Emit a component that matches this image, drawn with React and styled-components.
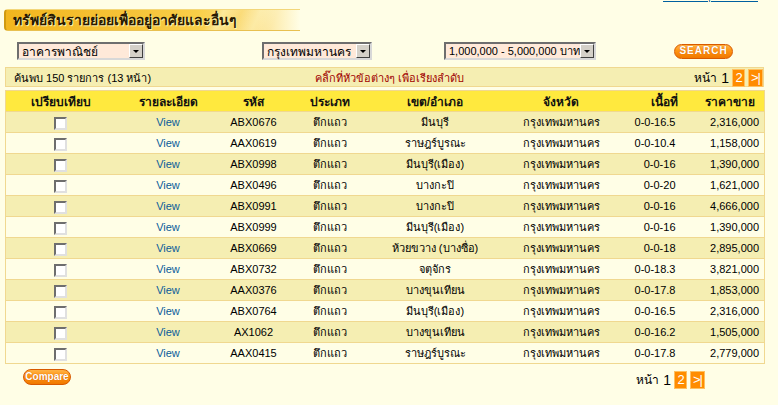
import React from 'react';
import styled, { createGlobalStyle } from 'styled-components';

const Global = createGlobalStyle`
  html, body { margin: 0; padding: 0; background: #fffee6; }
  body {
    font-family: Tahoma, "Liberation Sans", "DejaVu Sans", sans-serif;
    font-size: 12px;
    color: #000;
  }
`;

const Page = styled.div`
  width: 778px;
  height: 405px;
  overflow: hidden;
  display: flex;
  flex-direction: column;
`;

const TopLinkRow = styled.div`
  height: 3px;
  overflow: hidden;
  display: flex;
  justify-content: flex-end;
  align-items: flex-end;
  padding-right: 20px;
`;

const TopLink = styled.a`
  color: #0060a0;
  font-size: 11px;
  line-height: 13px;
  white-space: nowrap;
`;

const TitleBar = styled.div`
  margin: 6px 0 0 4px;
  width: 296px;
  height: 22px;
  box-sizing: border-box;
  border-radius: 4px 0 0 4px;
  border-left: 2px solid #d09a10;
  border-top: 1px solid #f3d77a;
  border-bottom: 1px solid #e8c050;
  background:
    linear-gradient(115deg, transparent 68%, rgba(255,255,220,0.45) 72%, transparent 78%, rgba(255,255,220,0.35) 84%, transparent 90%),
    linear-gradient(90deg, #f2b61e 0%, #f6c43a 45%, #f9cf48 65%, #fbe08a 85%, #fffee6 100%);
  display: flex;
  align-items: center;
  padding-left: 7px;
`;

const TitleText = styled.h1`
  margin: 0;
  font-size: 14px;
  font-weight: bold;
  color: #2a1a00;
  text-shadow: 1px 1px 0 #fff3b0;
  white-space: nowrap;
`;

const FilterRow = styled.div`
  display: flex;
  align-items: center;
  height: 18px;
  margin-top: 11px;
`;

const Select = styled.div`
  margin-left: ${p => p.$ml}px;
  width: ${p => p.$w}px;
  height: 18px;
  box-sizing: border-box;
  border: 2px solid;
  border-color: #6e6e6e #d8d8d8 #d8d8d8 #6e6e6e;
  background: #ffe9d9;
  display: flex;
  align-items: center;
  justify-content: space-between;
`;

const SelectText = styled.span`
  padding-left: 3px;
  font-size: ${p => p.$fs || 12}px;
  white-space: nowrap;
  overflow: hidden;
  color: #000;
`;

const SelectArrow = styled.span`
  flex: none;
  width: 14px;
  height: 14px;
  box-sizing: border-box;
  background: #d4d0c8;
  border: 1px solid;
  border-color: #fff #404040 #404040 #fff;
  display: flex;
  align-items: center;
  justify-content: center;
  &::after {
    content: '';
    border-left: 3px solid transparent;
    border-right: 3px solid transparent;
    border-top: 3px solid #000;
  }
`;

const PillButton = styled.button`
  margin-left: ${p => p.$ml || 0}px;
  width: ${p => p.$w}px;
  height: ${p => p.$h}px;
  padding: 0;
  border: 1px solid #d85a00;
  border-radius: 9px;
  background: linear-gradient(180deg, #ffb347 0%, #ff9412 45%, #f07800 100%);
  color: #fff;
  font-family: "Liberation Sans", Arial, sans-serif;
  font-weight: bold;
  font-size: ${p => p.$fs}px;
  letter-spacing: ${p => p.$ls || 0}px;
  line-height: 1;
  white-space: nowrap;
  text-shadow: 0 0 1px #c05000;
  cursor: pointer;
`;

const InfoBar = styled.div`
  margin: 7px 0 0 5px;
  width: 759px;
  height: 20px;
  box-sizing: border-box;
  border: 1px solid #f0d890;
  background: #f5eeb2;
  display: grid;
  grid-template-columns: 301px 1fr auto;
  align-items: center;
  padding-left: 8px;
  font-size: 11px;
`;

const InfoText = styled.span`
  color: ${p => p.$c || '#000'};
  white-space: nowrap;
`;

const Pager = styled.div`
  display: flex;
  align-items: center;
  gap: 3px;
  justify-content: flex-end;
`;

const PagerLabel = styled.span`
  font-size: 12px;
  margin-right: 1px;
`;

const PagerNum = styled.span`
  font-family: "Liberation Sans", sans-serif;
  font-size: 14px;
`;

const PageBox = styled.a`
  width: ${p => p.$w || 13}px;
  height: 18px;
  box-sizing: border-box;
  border: 1px solid #ffc060;
  background: #ff8c00;
  color: #fff;
  font-family: "Liberation Sans", sans-serif;
  font-size: 13px;
  letter-spacing: -1px;
  display: flex;
  align-items: center;
  justify-content: center;
  text-decoration: none;
`;

const Table = styled.table`
  margin: 3px 0 0 5px;
  width: 759px;
  border-collapse: collapse;
  table-layout: fixed;
  border: 1px solid #f0d890;
`;

const Th = styled.th`
  height: 20px;
  padding: 0 ${p => p.$pr || 0}px 0 0;
  background: #ffe93e;
  font-size: 12px;
  font-weight: bold;
  color: #111;
  text-align: ${p => p.$align || 'center'};
  border-bottom: 1px solid #f0d890;
`;

const Tr = styled.tr`
  background: ${p => (p.$odd ? '#f5eeb2' : '#fffee6')};
`;

const Td = styled.td`
  height: 20px;
  padding: 0 ${p => p.$pr || 0}px 0 0;
  border-bottom: 1px solid #f0d890;
  text-align: ${p => p.$align || 'center'};
  white-space: nowrap;
  font-size: 11px;
  color: #000;
`;

const Check = styled.input.attrs({ type: 'checkbox' })`
  appearance: none;
  margin: 2px 0 0 0;
  width: 13px;
  height: 13px;
  box-sizing: border-box;
  background: #fff;
  border: 2px solid;
  border-color: #6e6e6e #e0e0e0 #e0e0e0 #6e6e6e;
  vertical-align: middle;
`;

const ViewLink = styled.a`
  color: #0a5c9a;
  text-decoration: none;
`;

const BottomRow = styled.div`
  display: flex;
  align-items: flex-start;
  justify-content: space-between;
  margin: 5px 0 0 23px;
  width: 682px;
`;

const BottomPager = styled(Pager)`
  margin-top: 1px;
`;

const rows = [
  ['ABX0676', 'มีนบุรี', '0-0-16.5', '2,316,000'],
  ['AAX0619', 'ราษฎร์บูรณะ', '0-0-10.4', '1,158,000'],
  ['ABX0998', 'มีนบุรี(เมือง)', '0-0-16', '1,390,000'],
  ['ABX0496', 'บางกะปิ', '0-0-20', '1,621,000'],
  ['ABX0991', 'บางกะปิ', '0-0-16', '4,666,000'],
  ['ABX0999', 'มีนบุรี(เมือง)', '0-0-16', '1,390,000'],
  ['ABX0669', 'ห้วยขวาง (บางซื่อ)', '0-0-18', '2,895,000'],
  ['ABX0732', 'จตุจักร', '0-0-18.3', '3,821,000'],
  ['AAX0376', 'บางขุนเทียน', '0-0-17.8', '1,853,000'],
  ['ABX0764', 'มีนบุรี(เมือง)', '0-0-16.5', '2,316,000'],
  ['AX1062', 'บางขุนเทียน', '0-0-16.2', '1,505,000'],
  ['AAX0415', 'ราษฎร์บูรณะ', '0-0-17.8', '2,779,000'],
];

const PagerBlock = () => (
  <>
    <PagerLabel>หน้า</PagerLabel>
    <PagerNum>1</PagerNum>
    <PageBox href="#">2</PageBox>
    <PageBox href="#" $w={15}>&gt;|</PageBox>
  </>
);

export default function App() {
  return (
    <Page>
      <Global />
      <TopLinkRow>
        <TopLink href="#">หน้าหลัก | ติดต่อเรา</TopLink>
      </TopLinkRow>
      <TitleBar>
        <TitleText>ทรัพย์สินรายย่อยเพื่ออยู่อาศัยและอื่นๆ</TitleText>
      </TitleBar>
      <FilterRow>
        <Select $ml={17} $w={128}>
          <SelectText>อาคารพาณิชย์</SelectText>
          <SelectArrow />
        </Select>
        <Select $ml={117} $w={110}>
          <SelectText>กรุงเทพมหานคร</SelectText>
          <SelectArrow />
        </Select>
        <Select $ml={72} $w={152}>
          <SelectText $fs={11}>1,000,000 - 5,000,000 บาท</SelectText>
          <SelectArrow />
        </Select>
        <PillButton $ml={78} $w={59} $h={15} $fs={10} $ls={1}>SEARCH</PillButton>
      </FilterRow>
      <InfoBar>
        <InfoText>ค้นพบ 150 รายการ (13 หน้า)</InfoText>
        <InfoText $c="#a00000">คลิ๊กที่หัวข้อต่างๆ เพื่อเรียงลำดับ</InfoText>
        <Pager><PagerBlock /></Pager>
      </InfoBar>
      <Table>
        <colgroup>
          <col style={{ width: 110 }} />
          <col style={{ width: 105 }} />
          <col style={{ width: 66 }} />
          <col style={{ width: 86 }} />
          <col style={{ width: 125 }} />
          <col style={{ width: 127 }} />
          <col style={{ width: 56 }} />
          <col style={{ width: 84 }} />
        </colgroup>
        <thead>
          <tr>
            <Th>เปรียบเทียบ</Th>
            <Th>รายละเอียด</Th>
            <Th>รหัส</Th>
            <Th>ประเภท</Th>
            <Th>เขต/อำเภอ</Th>
            <Th>จังหวัด</Th>
            <Th $align="right" $pr={3}>เนื้อที่</Th>
            <Th $align="right" $pr={9}>ราคาขาย</Th>
          </tr>
        </thead>
        <tbody>
          {rows.map((r, i) => (
            <Tr key={r[0]} $odd={i % 2 === 0}>
              <Td><Check /></Td>
              <Td><ViewLink href="#">View</ViewLink></Td>
              <Td>{r[0]}</Td>
              <Td>ตึกแถว</Td>
              <Td>{r[1]}</Td>
              <Td>กรุงเทพมหานคร</Td>
              <Td $align="right" $pr={5}>{r[2]}</Td>
              <Td $align="right" $pr={5}>{r[3]}</Td>
            </Tr>
          ))}
        </tbody>
      </Table>
      <BottomRow>
        <PillButton $w={48} $h={16} $fs={10}>Compare</PillButton>
        <BottomPager><PagerBlock /></BottomPager>
      </BottomRow>
    </Page>
  );
}
